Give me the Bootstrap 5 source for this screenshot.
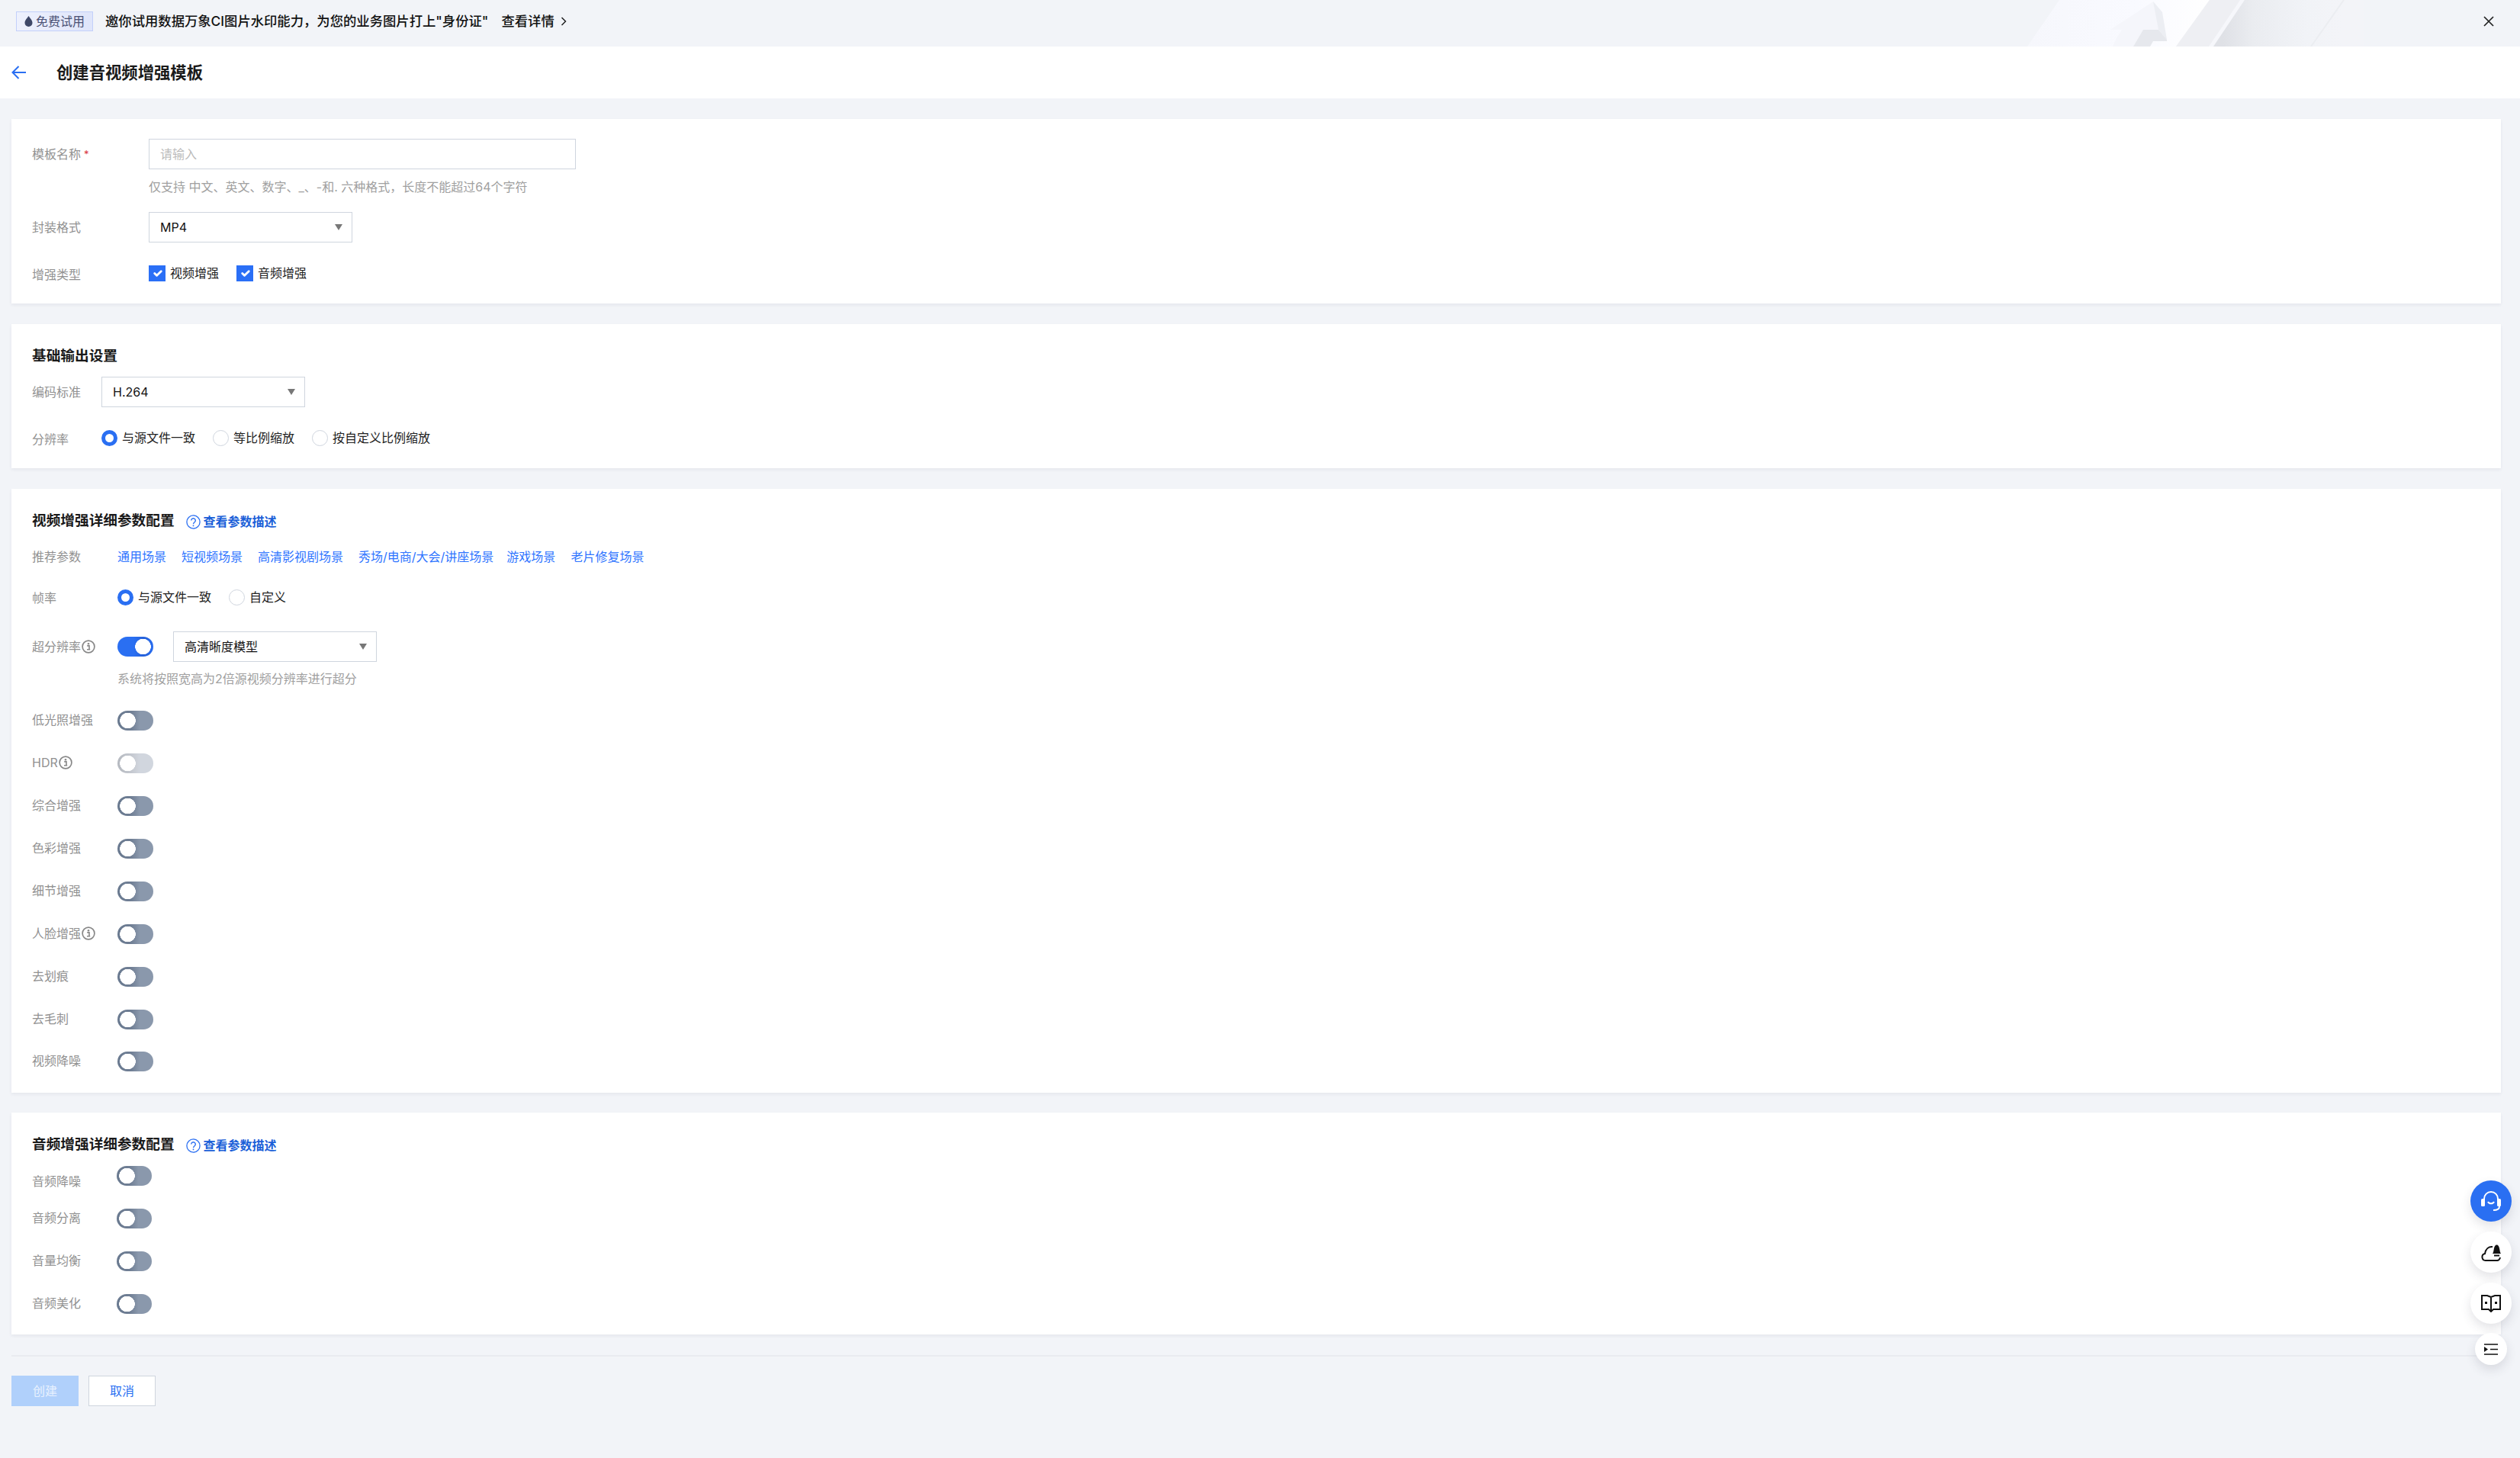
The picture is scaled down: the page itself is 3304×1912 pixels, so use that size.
<!DOCTYPE html>
<html lang="zh-CN">
<head>
<meta charset="utf-8">
<title>创建音视频增强模板</title>
<link href="https://cdn.jsdelivr.net/npm/bootstrap@5.3.0/dist/css/bootstrap.min.css" rel="stylesheet">
<style>
html,body{height:100%}
body{background:#f2f4f8;font-family:Inter,"Noto Sans CJK SC",sans-serif;font-size:16px;color:#222;line-height:26px;min-height:1912px;overflow:hidden}
.promo{height:61px;background:#f2f4f8;position:relative;overflow:hidden}
.promo-art{position:absolute;left:2600px;top:0;width:500px;height:61px}
.promo-inner{position:relative;height:61px;padding:0 34px 5px 21px}
.promo-tag{height:26px;width:101px;margin-right:16px;border:1px solid #c3d0fa;background:linear-gradient(90deg,#eef1fd,#dfe5fa);color:#4a5174;font-size:16px;line-height:24px}
.promo-text{font-size:17.33px;font-weight:500;color:#111;line-height:26px}
.promo-more{margin-left:17px}
.page-head{height:68px;background:#fff;padding-left:15px}
.page-title{font-size:21.33px;font-weight:700;color:#1a1a1a;margin:0 0 0 40px;line-height:30px}
.main-wrap{padding:27px 25px 0 15px}
.panel{background:#fff;box-shadow:0 2px 4px rgba(54,58,80,.07);padding-left:27px;margin-bottom:27px}
.p-one{height:242px;padding-top:26px}
.p-two{height:189px;padding-top:29px}
.p-three{height:792px;padding-top:29px;margin-bottom:26px}
.p-four{height:291px;padding-top:29px}
.sec-title{font-size:18.67px;font-weight:700;color:#1a1a1a;line-height:26px;margin:0}
.doc-link{margin-left:15px;color:#1b5fd8;font-weight:600;font-size:16px;text-decoration:none;line-height:26px;position:relative;top:1px}
.doc-link svg{margin-right:4px}
.fl{color:#919191;flex:none;line-height:26px;display:flex;align-items:center}
.w-a{width:153px}.w-b{width:91px}.w-c{width:112px}.w-d{width:111px}
.nudge-up{position:relative;top:-1px}
.nudge-down{position:relative;top:2px}
.nudge-one{position:relative;top:1px}
.nudge-low{position:relative;top:7px}
.req{color:#d9363e;margin-left:4px;font-size:13px}
.ctl{height:40px;border:1px solid #cfd5de;border-radius:0;font-size:16px;color:#111;padding:0 14px;background-color:#fff;box-shadow:none}
.ctl::placeholder{color:#bbb}
.txt-in{width:560px;flex:none}
.sel-box{width:267px;flex:none;background-image:url("data:image/svg+xml,%3Csvg xmlns='http://www.w3.org/2000/svg' width='10' height='10'%3E%3Cpath d='M0 1h10L5 9z' fill='%23777'/%3E%3C/svg%3E");background-position:right 12px center;background-size:10px 10px;font-family:Inter,"Noto Sans CJK SC",sans-serif}
.sel-gap{margin-left:26px}
.hint{color:#a0a0a0;line-height:24px}
.hint-a{margin:11px 0 0 153px}
.hint-b{margin:10px 0 30px 112px}
.opt-gap{margin-right:23px}
.form-check-input.chk{width:22px;height:21px;margin:0 6px 0 0;border-radius:0;border:0;flex:none;background-color:#2a6ff6;background-size:19px}
.form-check-input.rad{width:21px;height:21px;margin:0 6px 0 0;flex:none;border:1px solid #cfd5de;box-shadow:none;background-image:none}
.form-check-input.rad:checked{border:5px solid #2a6ff2;background-color:#fff;background-image:none}
.form-switch .tog,.form-switch .tog:focus,.form-switch .tog:checked{width:47px;height:26px;margin:0;border:0;border-radius:13px;box-shadow:none;opacity:1;background-size:auto;background-position:0 0;background-color:transparent;background-image:radial-gradient(circle 10.5px at 13.5px 50%,#fff 96%,transparent 100%),linear-gradient(90deg,#6a7a90 0,#6f7e94 38%,#8a98ac 62%,#8a98ac 100%)}
.form-switch .tog:checked{background-image:radial-gradient(circle 10.5px at 33.5px 50%,#fff 96%,transparent 100%),linear-gradient(90deg,#2a6ff2 0,#2a6ff2 45%,#2560d8 75%,#2a6ff2 100%)}
.form-switch .tog:disabled{background-image:radial-gradient(circle 10.5px at 13.5px 50%,#fff 96%,transparent 100%),linear-gradient(90deg,#b5b9c0 0,#c4c8cf 38%,#d1d6de 62%,#d1d6de 100%)}
.form-switch .tog.narrow{width:46px}
.sw-holder{padding:0;margin:0;min-height:0;display:flex}
.sw-row{height:26px;margin-bottom:30px}
.sw-row:last-child{margin-bottom:0}
.sw-row.pull{margin-top:-1px}
.rec-link{color:#2e74ff;text-decoration:none;margin-right:20px}
.rec-link.tight{margin-right:17px}
.mt-r1{margin-top:21px}.mt-r2{margin-top:27px}.mt-r3{margin-top:32px}.mt-r4{margin-top:14px}.mt-r5{margin-top:21px}
.mb-r4{margin-bottom:15px}
.foot-rule{border-top:2px solid #e9ebf0;margin:0 0 25px;opacity:1}
.act{height:40px;border-radius:0;font-size:16px;padding:0;width:88px;line-height:38px}
.act-main,.act-main:disabled{background:#b0d0fb;border:1px solid #b0d0fb;color:#e8f1fe;opacity:1}
.act-sub{background:#fff;border:1px solid #cfd5de;color:#2a6ff2;margin-left:13px}
.dock{position:fixed;left:3239px;top:1548px;width:54px}
.dock-btn{width:54px;height:54px;border-radius:50%;background:#fff;box-shadow:0 6px 14px rgba(54,58,80,.14);margin-bottom:13px}
.dock-btn.on{background:#2a6ff2}
.dock-btn.mid{margin-bottom:12px}
.dock-btn.mini{width:42px;height:42px;margin:0 6px}
.tinfo{margin-left:1px;flex:none}
</style>
</head>
<body>
<svg width="0" height="0" class="position-absolute">
  <symbol id="i-info" viewBox="0 0 18 18"><circle cx="9" cy="9" r="7.9" fill="none" stroke="#888" stroke-width="1.7"/><circle cx="9" cy="5.2" r="1.3" fill="#888"/><path d="M7.2 7.9H10v4.900h1.200M7 12.800h4" fill="none" stroke="#888" stroke-width="1.6"/></symbol>
  <symbol id="i-help" viewBox="0 0 19 19"><circle cx="9.5" cy="9.5" r="8.6" fill="none" stroke="#2a6ff2" stroke-width="1.3"/><path d="M6.7 7.5a2.8 2.8 0 1 1 4.4 2.3c-1 .7-1.6 1.2-1.6 2.4" fill="none" stroke="#2a6ff2" stroke-width="1.4"/><circle cx="9.5" cy="14.4" r=".9" fill="#2a6ff2"/></symbol>
</svg>

<div class="promo">
  <svg class="promo-art" viewBox="0 0 500 61" preserveAspectRatio="none" aria-hidden="true">
    <defs>
      <linearGradient id="ga" x1="0" x2="1" y1="0" y2="0"><stop offset="0" stop-color="#f6f7fc"/><stop offset=".6" stop-color="#f9faff"/><stop offset="1" stop-color="#fff"/></linearGradient>
      <linearGradient id="gb" gradientUnits="userSpaceOnUse" x1="315" x2="470" y1="30" y2="30"><stop offset="0" stop-color="#dfe1e6"/><stop offset=".25" stop-color="#eaecf0"/><stop offset=".7" stop-color="#f1f3f7"/><stop offset="1" stop-color="#f3f4f8"/></linearGradient>
    </defs>
    <path d="M100 0H297L253 61H58z" fill="url(#ga)"/>
    <path d="M297 0H343L302 61H253z" fill="#eeeff3"/>
    <path d="M337 0H343L302 61H296z" fill="#f6f7fb"/>
    <path d="M343 0H500V61H302z" fill="url(#gb)"/>
    <path d="M473 0L430 61" stroke="#ebedf1" stroke-width="2" fill="none"/>
    <path d="M223 2L167 39H182L175 50 170 61H197L210 39H230L235 16z" fill="#f5f6fb"/>
    <path d="M223 2L235 16 241 52 230 39z" fill="#eceef3"/>
    <path d="M210 39H230L241 52 241 54H223L219 61H197z" fill="#e6e8ed"/>
  </svg>
  <div class="promo-inner d-flex align-items-center">
    <span class="promo-tag d-inline-flex align-items-center justify-content-center">
      <svg width="11" height="14" viewBox="0 0 11 14" class="me-1"><path d="M5.500 0C3.500 3 .5 5.500.5 9a5 5 0 0 0 10 0C10.500 5.500 7.500 3 5.500 0z" fill="#3f4868"/></svg>免费试用</span>
    <span class="promo-text">邀你试用数据万象CI图片水印能力，为您的业务图片打上"身份证"</span>
    <span class="promo-text promo-more d-inline-flex align-items-center">查看详情<svg width="8" height="12" viewBox="0 0 8 12" class="ms-2"><path d="M1.500 1l5 5-5 5" fill="none" stroke="#222" stroke-width="1.500"/></svg></span>
    <svg width="14" height="14" viewBox="0 0 14 14" class="ms-auto"><path d="M1 1l12 12M13 1L1 13" stroke="#222" stroke-width="1.700" fill="none"/></svg>
  </div>
</div>

<div class="page-head d-flex align-items-center">
  <svg width="19" height="18" viewBox="0 0 19 18"><path d="M9.500 1L1.500 9l8 8M2 9h17" fill="none" stroke="#2a6ff2" stroke-width="2"/></svg>
  <h1 class="page-title">创建音视频增强模板</h1>
</div>

<div class="main-wrap">
  <section class="panel p-one">
    <div class="d-flex align-items-center"><span class="fl w-a">模板名称<span class="req">*</span></span><input class="form-control ctl txt-in" placeholder="请输入"></div>
    <div class="hint hint-a">仅支持 中文、英文、数字、_、-和. 六种格式，长度不能超过64个字符</div>
    <div class="d-flex align-items-center mt-r1"><span class="fl w-a">封装格式</span><select class="form-select ctl sel-box"><option>MP4</option></select></div>
    <div class="d-flex align-items-center mt-r2">
      <span class="fl w-a nudge-down">增强类型</span>
      <label class="d-flex align-items-center opt-gap"><input type="checkbox" class="form-check-input chk" checked>视频增强</label>
      <label class="d-flex align-items-center"><input type="checkbox" class="form-check-input chk" checked>音频增强</label>
    </div>
  </section>

  <section class="panel p-two">
    <h2 class="sec-title">基础输出设置</h2>
    <div class="d-flex align-items-center mt-r4"><span class="fl w-b">编码标准</span><select class="form-select ctl sel-box"><option>H.264</option></select></div>
    <div class="d-flex align-items-center mt-r2">
      <span class="fl w-b nudge-down">分辨率</span>
      <label class="d-flex align-items-center opt-gap"><input type="radio" name="r1" class="form-check-input rad" checked>与源文件一致</label>
      <label class="d-flex align-items-center opt-gap"><input type="radio" name="r1" class="form-check-input rad">等比例缩放</label>
      <label class="d-flex align-items-center"><input type="radio" name="r1" class="form-check-input rad">按自定义比例缩放</label>
    </div>
  </section>

  <section class="panel p-three">
    <div class="d-flex align-items-center"><h2 class="sec-title">视频增强详细参数配置</h2><a class="doc-link d-flex align-items-center" href="#"><svg width="19" height="19"><use href="#i-help"/></svg>查看参数描述</a></div>
    <div class="d-flex align-items-center mt-r5"><span class="fl w-c">推荐参数</span><a class="rec-link" href="#">通用场景</a><a class="rec-link" href="#">短视频场景</a><a class="rec-link" href="#">高清影视剧场景</a><a class="rec-link tight" href="#">秀场/电商/大会/讲座场景</a><a class="rec-link" href="#">游戏场景</a><a class="rec-link" href="#">老片修复场景</a></div>
    <div class="d-flex align-items-center mt-r2">
      <span class="fl w-c nudge-one">帧率</span>
      <label class="d-flex align-items-center opt-gap"><input type="radio" name="r2" class="form-check-input rad" checked>与源文件一致</label>
      <label class="d-flex align-items-center"><input type="radio" name="r2" class="form-check-input rad">自定义</label>
    </div>
    <div class="d-flex align-items-center mt-r3">
      <span class="fl w-c">超分辨率<svg class="tinfo" width="18" height="18"><use href="#i-info"/></svg></span>
      <div class="form-check form-switch sw-holder"><input class="form-check-input tog" type="checkbox" role="switch" checked></div>
      <select class="form-select ctl sel-box sel-gap"><option>高清晰度模型</option></select>
    </div>
    <div class="hint hint-b">系统将按照宽高为2倍源视频分辨率进行超分</div>
    <div class="sw-row d-flex align-items-center"><span class="fl w-c nudge-up">低光照增强</span><div class="form-check form-switch sw-holder"><input class="form-check-input tog" type="checkbox" role="switch"></div></div>
    <div class="sw-row d-flex align-items-center"><span class="fl w-c nudge-up">HDR<svg class="tinfo" width="18" height="18"><use href="#i-info"/></svg></span><div class="form-check form-switch sw-holder"><input class="form-check-input tog" type="checkbox" role="switch" disabled></div></div>
    <div class="sw-row d-flex align-items-center"><span class="fl w-c nudge-up">综合增强</span><div class="form-check form-switch sw-holder"><input class="form-check-input tog" type="checkbox" role="switch"></div></div>
    <div class="sw-row d-flex align-items-center"><span class="fl w-c nudge-up">色彩增强</span><div class="form-check form-switch sw-holder"><input class="form-check-input tog" type="checkbox" role="switch"></div></div>
    <div class="sw-row d-flex align-items-center"><span class="fl w-c nudge-up">细节增强</span><div class="form-check form-switch sw-holder"><input class="form-check-input tog" type="checkbox" role="switch"></div></div>
    <div class="sw-row d-flex align-items-center"><span class="fl w-c nudge-up">人脸增强<svg class="tinfo" width="18" height="18"><use href="#i-info"/></svg></span><div class="form-check form-switch sw-holder"><input class="form-check-input tog" type="checkbox" role="switch"></div></div>
    <div class="sw-row d-flex align-items-center"><span class="fl w-c nudge-up">去划痕</span><div class="form-check form-switch sw-holder"><input class="form-check-input tog" type="checkbox" role="switch"></div></div>
    <div class="sw-row d-flex align-items-center"><span class="fl w-c nudge-up">去毛刺</span><div class="form-check form-switch sw-holder"><input class="form-check-input tog" type="checkbox" role="switch"></div></div>
    <div class="sw-row pull d-flex align-items-center"><span class="fl w-c nudge-up">视频降噪</span><div class="form-check form-switch sw-holder"><input class="form-check-input tog" type="checkbox" role="switch"></div></div>
  </section>

  <section class="panel p-four">
    <div class="d-flex align-items-center mb-r4"><h2 class="sec-title">音频增强详细参数配置</h2><a class="doc-link d-flex align-items-center" href="#"><svg width="19" height="19"><use href="#i-help"/></svg>查看参数描述</a></div>
    <div class="sw-row d-flex align-items-center"><span class="fl w-d nudge-low">音频降噪</span><div class="form-check form-switch sw-holder"><input class="form-check-input tog narrow" type="checkbox" role="switch"></div></div>
    <div class="sw-row d-flex align-items-center"><span class="fl w-d nudge-up">音频分离</span><div class="form-check form-switch sw-holder"><input class="form-check-input tog narrow" type="checkbox" role="switch"></div></div>
    <div class="sw-row d-flex align-items-center"><span class="fl w-d nudge-up">音量均衡</span><div class="form-check form-switch sw-holder"><input class="form-check-input tog narrow" type="checkbox" role="switch"></div></div>
    <div class="sw-row d-flex align-items-center"><span class="fl w-d nudge-up">音频美化</span><div class="form-check form-switch sw-holder"><input class="form-check-input tog narrow" type="checkbox" role="switch"></div></div>
  </section>

  <hr class="foot-rule">
  <div class="d-flex"><button class="btn act act-main" disabled>创建</button><button class="btn act act-sub">取消</button></div>
</div>

<nav class="dock" aria-label="工具">
  <div class="dock-btn on d-flex align-items-center justify-content-center"><svg width="26" height="26" viewBox="0 0 26 26"><path d="M4 12v-2a9 9 0 0 1 18 0v2" fill="none" stroke="#fff" stroke-width="2"/><rect x="0" y="10" width="5" height="10" rx="1.500" fill="#fff"/><rect x="21" y="10" width="5" height="10" rx="1.500" fill="#fff"/><path d="M9 14c1.500 3 6.500 3 8 0M24 20c0 3.500-3 5-8 5" fill="none" stroke="#fff" stroke-width="2"/></svg></div>
  <div class="dock-btn d-flex align-items-center justify-content-center"><svg width="26" height="23" viewBox="0 0 26 23"><path d="M21 22H6a4.500 4.500 0 0 1-1-8.900C6 7 10 3.500 15 4" fill="none" stroke="#111" stroke-width="2"/><path d="M15 13c1-1 1.300-3 1.800-6 .5-3 1.500-5.500 3.700-5.500s3.200 2.500 3.700 5.500c.5 3 .8 5 1.800 6z" fill="#111"/><path d="M17 15.500h7M25 18c-.5 2-2 4-4 4" fill="none" stroke="#111" stroke-width="2"/></svg></div>
  <div class="dock-btn mid d-flex align-items-center justify-content-center"><svg width="28" height="24" viewBox="0 0 28 24"><path d="M14 4L9 2H2v18h9l3 3 3-3h9V2h-7zM14 4v18" fill="none" stroke="#111" stroke-width="2"/><rect x="6" y="10" width="3" height="3" fill="#111"/><rect x="19" y="10" width="3" height="3" fill="#111"/></svg></div>
  <div class="dock-btn mini d-flex align-items-center justify-content-center"><svg width="18" height="15" viewBox="0 0 18 15"><path d="M0 1h18M8 7.500h10M0 14h18" stroke="#111" stroke-width="1.700" fill="none"/><path d="M0 4l5 3.500L0 11z" fill="#111"/></svg></div>
</nav>
<script src="https://cdn.jsdelivr.net/npm/bootstrap@5.3.0/dist/js/bootstrap.bundle.min.js"></script>
</body>
</html>
